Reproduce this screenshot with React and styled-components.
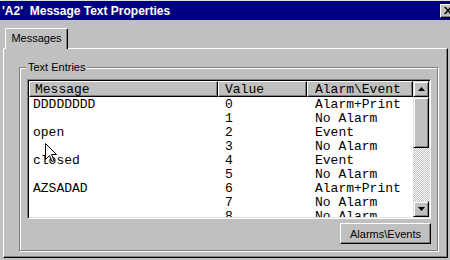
import React from 'react';
import styled, { createGlobalStyle } from 'styled-components';

const Global = createGlobalStyle`
  html, body { margin: 0; padding: 0; background: #c0c0c0; overflow: hidden; }
  #root { width: 450px; height: 260px; }
`;

const Window = styled.div`
  position: relative;
  width: 450px;
  height: 260px;
  box-sizing: border-box;
  border-top: 1px solid #dfdfdf;
  background: #c0c0c0;
  display: flex;
  flex-direction: column;
  font-family: "Liberation Sans", Arial, sans-serif;
  color: #000;
  overflow: hidden;
`;

const TitleBar = styled.div`
  flex: none;
  height: 19px;
  background: #000080;
  color: #fff;
  display: flex;
  align-items: center;
  justify-content: space-between;
  padding-left: 2px;
  font-weight: bold;
  font-size: 12px;
  white-space: pre;
  overflow: hidden;
`;

const CloseButton = styled.div`
  flex: none;
  width: 16px;
  height: 14px;
  margin-right: -6px;
  box-sizing: border-box;
  background: #c0c0c0;
  border: 1px solid;
  border-color: #fff #000 #000 #fff;
  box-shadow: inset -1px -1px #808080;
  display: flex;
  align-items: center;
  justify-content: center;
`;

const Body = styled.div`
  flex: 1;
  min-height: 0;
  display: flex;
  flex-direction: column;
  padding: 8px 2px 2px 3px;
`;

const TabStrip = styled.div`
  flex: none;
  height: 20px;
  display: flex;
  padding-left: 2px;
  position: relative;
  z-index: 1;
`;

const Tab = styled.div`
  width: 63px;
  height: 21px;
  box-sizing: border-box;
  background: #c0c0c0;
  border-top: 1px solid #fff;
  border-left: 1px solid #fff;
  border-right: 1px solid #000;
  border-top-left-radius: 2px;
  border-top-right-radius: 2px;
  box-shadow: inset -1px 0 #808080;
  font-size: 11px;
  display: flex;
  align-items: center;
  justify-content: center;
  padding-bottom: 2px;
`;

const Panel = styled.div`
  flex: 1;
  min-height: 0;
  display: flex;
  flex-direction: column;
  box-sizing: border-box;
  border: 1px solid;
  border-color: #fff #000 #000 #fff;
  box-shadow: inset -1px -1px #808080;
  padding: 18px 9px 6px 15px;
`;

const Group = styled.div`
  flex: 1;
  position: relative;
  display: flex;
  flex-direction: column;
  border: 1px solid #808080;
  box-shadow: inset 1px 1px #fff, 1px 1px #fff;
  padding: 11px 6px 6px 7px;
`;

const Legend = styled.span`
  position: absolute;
  top: -8px;
  left: 6px;
  padding: 0 2px;
  background: #c0c0c0;
  font-size: 11px;
  line-height: 14px;
`;

const ListBox = styled.div`
  flex: none;
  height: 140px;
  box-sizing: border-box;
  display: flex;
  border: 1px solid;
  border-color: #808080 #fff #fff #808080;
  box-shadow: inset 1px 1px #000, inset -1px -1px #dfdfdf;
  background: #fff;
  padding: 1px;
`;

const Table = styled.div`
  flex: 1;
  display: flex;
  flex-direction: column;
  min-width: 0;
  font-family: "Liberation Mono", "Courier New", monospace;
  font-size: 13px;
`;

const cols = '189px 89px 106px';

const HeaderRow = styled.div`
  flex: none;
  display: grid;
  grid-template-columns: ${cols};
  height: 16px;
`;

const HeaderCell = styled.div`
  box-sizing: border-box;
  background: #c0c0c0;
  border: 1px solid;
  border-color: #fff #000 #000 #fff;
  box-shadow: inset -1px -1px #808080;
  line-height: 15px;
  padding-left: ${p => p.$pad}px;
  white-space: pre;
  overflow: hidden;
`;

const Rows = styled.div`
  flex: 1;
  overflow: hidden;
`;

const Row = styled.div`
  display: grid;
  grid-template-columns: ${cols};
  height: 14px;
  line-height: 14px;
  padding-top: 1px;
  box-sizing: border-box;
  overflow: visible;
`;

const Cell = styled.div`
  padding-left: ${p => p.$pad}px;
  white-space: pre;
`;

const ScrollBar = styled.div`
  flex: none;
  width: 16px;
  display: flex;
  flex-direction: column;
`;

const ScrollButton = styled.div`
  flex: none;
  width: 16px;
  height: 16px;
  box-sizing: border-box;
  background: #c0c0c0;
  border: 1px solid;
  border-color: #dfdfdf #000 #000 #dfdfdf;
  box-shadow: inset 1px 1px #fff, inset -1px -1px #808080;
  display: flex;
  align-items: center;
  justify-content: center;
`;

const Track = styled.div`
  flex: 1;
  background: repeating-conic-gradient(#c0c0c0 0 25%, #ffffff 0 50%) 0 0 / 2px 2px;
`;

const Thumb = styled.div`
  height: 51px;
  box-sizing: border-box;
  background: #c0c0c0;
  border: 1px solid;
  border-color: #dfdfdf #000 #000 #dfdfdf;
  box-shadow: inset 1px 1px #fff, inset -1px -1px #808080;
`;

const Footer = styled.div`
  flex: none;
  display: flex;
  justify-content: flex-end;
  margin-top: 4px;
`;

const Button = styled.div`
  width: 91px;
  height: 21px;
  box-sizing: border-box;
  background: #c0c0c0;
  border: 1px solid;
  border-color: #fff #000 #000 #fff;
  box-shadow: inset -1px -1px #808080;
  font-size: 11px;
  display: flex;
  align-items: center;
  justify-content: center;
`;

const Cursor = styled.svg`
  position: absolute;
  left: 45px;
  top: 142px;
  pointer-events: none;
`;

const rows = [
  ['DDDDDDDD', '0', 'Alarm+Print'],
  ['', '1', 'No Alarm'],
  ['open', '2', 'Event'],
  ['', '3', 'No Alarm'],
  ['closed', '4', 'Event'],
  ['', '5', 'No Alarm'],
  ['AZSADAD', '6', 'Alarm+Print'],
  ['', '7', 'No Alarm'],
  ['', '8', 'No Alarm'],
];

const headPad = [5, 6, 7];
const cellPad = [4, 7, 8];

export default function App() {
  return (
    <>
      <Global />
      <Window>
        <TitleBar>
          <span>{"'A2'  Message Text Properties"}</span>
          <CloseButton>
            <svg width="8" height="7" viewBox="0 0 8 7">
              <path d="M0 0h2l2 2.5L6 0h2L5 3.5 8 7H6L4 4.5 2 7H0l3-3.5z" fill="#000" />
            </svg>
          </CloseButton>
        </TitleBar>
        <Body>
          <TabStrip>
            <Tab>Messages</Tab>
          </TabStrip>
          <Panel>
            <Group>
              <Legend>Text Entries</Legend>
              <ListBox>
                <Table>
                  <HeaderRow>
                    {['Message', 'Value', 'Alarm\\Event'].map((h, i) => (
                      <HeaderCell key={h} $pad={headPad[i]}>{h}</HeaderCell>
                    ))}
                  </HeaderRow>
                  <Rows>
                    {rows.map((r, ri) => (
                      <Row key={ri}>
                        {r.map((c, ci) => (
                          <Cell key={ci} $pad={cellPad[ci]}>{c}</Cell>
                        ))}
                      </Row>
                    ))}
                  </Rows>
                </Table>
                <ScrollBar>
                  <ScrollButton>
                    <svg width="7" height="4" viewBox="0 0 7 4">
                      <path d="M3.5 0L7 4H0z" fill="#000" />
                    </svg>
                  </ScrollButton>
                  <Track>
                    <Thumb />
                  </Track>
                  <ScrollButton>
                    <svg width="7" height="4" viewBox="0 0 7 4">
                      <path d="M0 0h7L3.5 4z" fill="#000" />
                    </svg>
                  </ScrollButton>
                </ScrollBar>
              </ListBox>
              <Footer>
                <Button>Alarms\Events</Button>
              </Footer>
            </Group>
          </Panel>
        </Body>
        <Cursor width="12" height="19" viewBox="0 0 12 19">
          <path d="M0.5 0.5V16.5L4.5 12.5L7 18.5L9 17.5L6.5 11.5H11.5Z" fill="#fff" stroke="#000" strokeWidth="1" />
        </Cursor>
      </Window>
    </>
  );
}
